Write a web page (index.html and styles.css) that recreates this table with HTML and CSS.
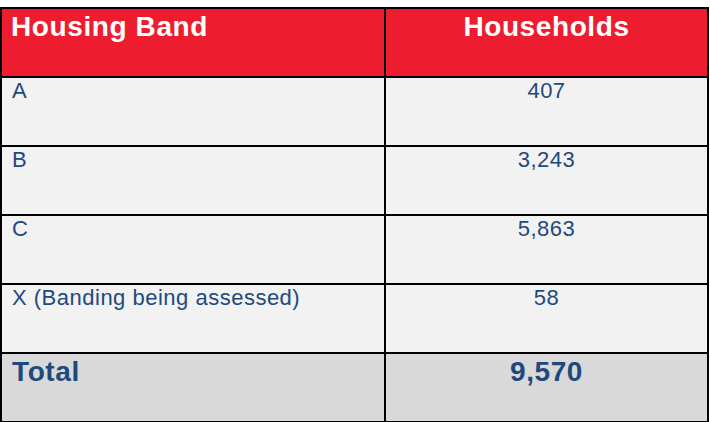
FILE: index.html
```html
<!DOCTYPE html>
<html lang="en">
<head>
<meta charset="utf-8">
<title>Housing Bands</title>
<link rel="stylesheet" href="styles.css">
</head>
<body>
<div class="page">
  <table class="bands">
    <colgroup>
      <col class="col-band">
      <col class="col-count">
    </colgroup>
    <thead>
      <tr class="head-row">
        <th class="cell-band">Housing Band</th>
        <th class="cell-count">Households</th>
      </tr>
    </thead>
    <tbody>
      <tr class="data-row">
        <td class="cell-band">A</td>
        <td class="cell-count">407</td>
      </tr>
      <tr class="data-row">
        <td class="cell-band">B</td>
        <td class="cell-count">3,243</td>
      </tr>
      <tr class="data-row">
        <td class="cell-band">C</td>
        <td class="cell-count">5,863</td>
      </tr>
      <tr class="data-row">
        <td class="cell-band">X (Banding being assessed)</td>
        <td class="cell-count">58</td>
      </tr>
      <tr class="total-row">
        <td class="cell-band">Total</td>
        <td class="cell-count">9,570</td>
      </tr>
    </tbody>
  </table>
</div>
</body>
</html>
```

FILE: styles.css
```css
html, body {
  margin: 0;
  padding: 0;
  background: #ffffff;
  font-family: "Liberation Sans", Arial, sans-serif;
}

.page {
  padding-top: 7px;
  height: 415px;
  overflow: hidden;
}

.bands {
  table-layout: fixed;
  width: 709px;
  border-collapse: separate;
  border-spacing: 2px;
  background: #000000;
}

.col-band {
  width: 382px;
}

.col-count {
  width: 321px;
}

.bands th,
.bands td {
  height: 67px;
  box-sizing: border-box;
  vertical-align: top;
  padding: 0;
}

.cell-band {
  text-align: left;
  padding-left: 10px !important;
}

.cell-count {
  text-align: center;
}

.head-row th {
  background: #ed1c2e;
  color: #ffffff;
  font-weight: bold;
  font-size: 28px;
  letter-spacing: 0.6px;
  padding-top: 2px;
}

.head-row .cell-band {
  padding-left: 9px !important;
}

.data-row td {
  background: #f2f2f2;
  color: #1f497d;
  font-size: 22px;
  letter-spacing: 0.5px;
}

.total-row td {
  background: #d9d9d9;
  color: #1f497d;
  font-weight: bold;
  font-size: 28px;
  letter-spacing: 0.6px;
  padding-top: 2px;
}
```
